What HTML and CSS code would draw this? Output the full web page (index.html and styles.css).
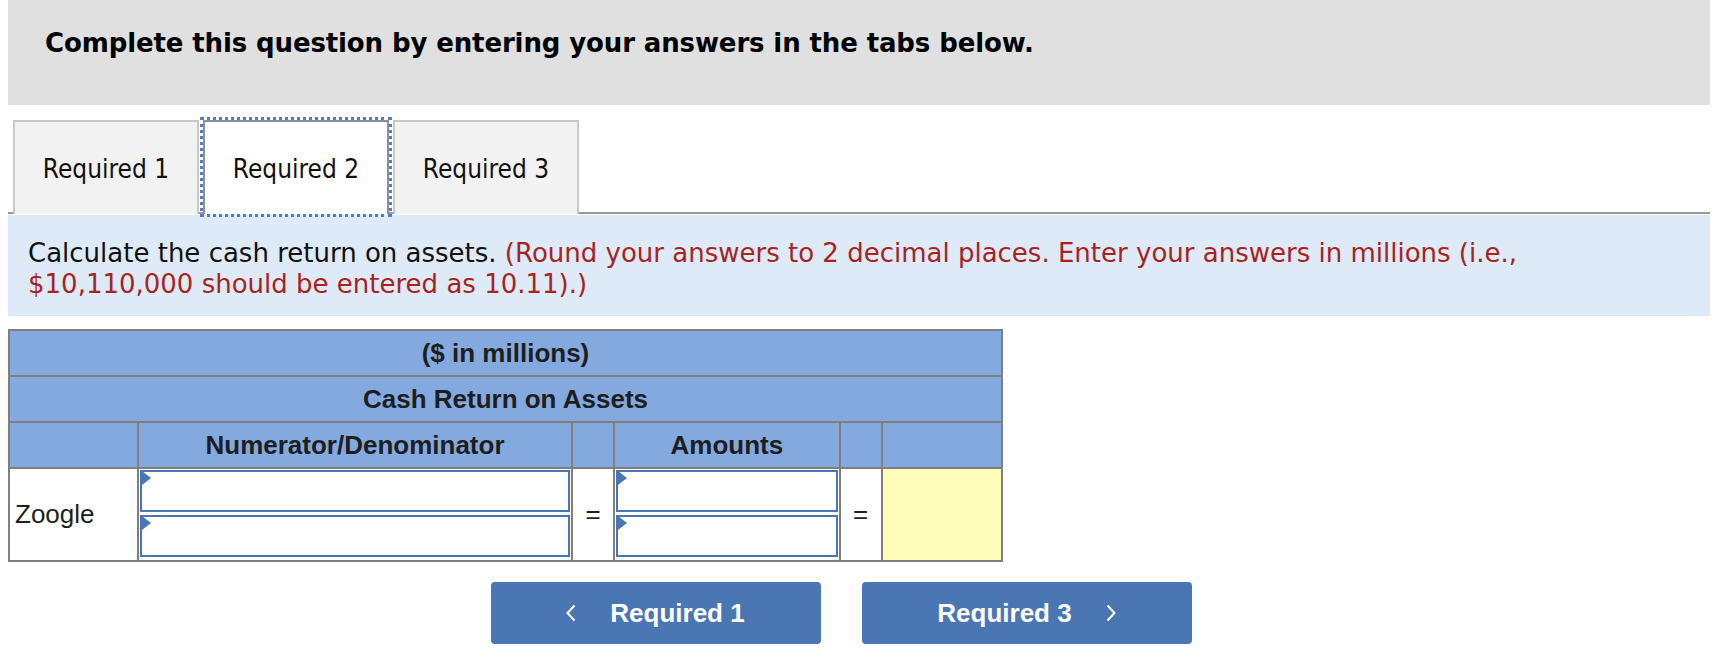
FILE: index.html
```html
<!DOCTYPE html>
<html lang="en">
<head>
<meta charset="utf-8">
<title>Cash return on assets</title>
<link rel="stylesheet" href="styles.css">
</head>
<body>
<div class="page">
  <header class="banner">
    <h1>Complete this question by entering your answers in the tabs below.</h1>
  </header>

  <nav class="tabs">
    <button class="tab">Required 1</button>
    <button class="tab active">Required 2</button>
    <button class="tab">Required 3</button>
  </nav>

  <div class="prompt">
    <p>Calculate the cash return on assets. <span class="note">(Round your answers to 2 decimal places. Enter your answers in millions (i.e.,<br>$10,110,000 should be entered as 10.11).)</span></p>
  </div>

  <table class="grid">
    <colgroup>
      <col class="c-label"><col class="c-frac"><col class="c-eq"><col class="c-amt"><col class="c-eq"><col class="c-res">
    </colgroup>
    <thead>
      <tr><th colspan="6">($ in millions)</th></tr>
      <tr><th colspan="6">Cash Return on Assets</th></tr>
      <tr><th></th><th>Numerator/Denominator</th><th></th><th>Amounts</th><th></th><th></th></tr>
    </thead>
    <tbody>
      <tr>
        <td class="label">Zoogle</td>
        <td class="inputs">
          <div class="field"><span class="flag"></span></div>
          <div class="field"><span class="flag"></span></div>
        </td>
        <td class="eq">=</td>
        <td class="inputs">
          <div class="field"><span class="flag"></span></div>
          <div class="field"><span class="flag"></span></div>
        </td>
        <td class="eq">=</td>
        <td class="result"></td>
      </tr>
    </tbody>
  </table>

  <div class="pager">
    <button class="nav-btn">
      <svg class="chev" viewBox="0 0 10 18" width="10" height="18"><polyline points="8.5,1.5 1.5,9 8.5,16.5" fill="none" stroke="#fff" stroke-width="2"/></svg>
      <span>Required 1</span>
    </button>
    <button class="nav-btn">
      <span>Required 3</span>
      <svg class="chev" viewBox="0 0 10 18" width="10" height="18"><polyline points="1.5,1.5 8.5,9 1.5,16.5" fill="none" stroke="#fff" stroke-width="2"/></svg>
    </button>
  </div>
</div>
</body>
</html>
```

FILE: styles.css
```css
html, body {
  margin: 0;
  padding: 0;
  background: #fff;
}

.page {
  width: 1702px;
  margin-left: 8px;
  font-family: "DejaVu Sans", Verdana, sans-serif;
}

.banner {
  background: #e0e0e0;
  height: 105px;
  box-sizing: border-box;
  padding: 27px 0 0 37px;
}

.banner h1 {
  margin: 0;
  font-size: 26px;
  line-height: 33px;
  font-weight: bold;
  color: #000;
  letter-spacing: -0.12px;
}

.tabs {
  display: flex;
  gap: 4px;
  margin-top: 15px;
  padding-left: 5px;
  border-bottom: 2px solid #999;
  height: 92px;
}

.tab {
  width: 186px;
  height: 94px;
  box-sizing: border-box;
  border: 2px solid #c8c8c8;
  border-bottom: none;
  background: #f2f2f2;
  font-family: "DejaVu Sans", Verdana, sans-serif;
  font-stretch: semi-condensed;
  font-size: 26px;
  color: #111;
  padding: 2px 0 0;
  position: relative;
}

.tab.active {
  background: #fff;
  border-color: #8f8f8f;
  z-index: 1;
  outline: 3px dotted #4f7fc6;
  outline-offset: 0;
}

.prompt {
  background: #deeaf7;
  margin-top: 1px;
  padding: 23px 20px 16px 20px;
}

.prompt p {
  margin: 0;
  font-size: 26px;
  line-height: 31px;
  color: #111;
}

.note {
  color: #a8231e;
}

.grid {
  margin-top: 13px;
  border-collapse: collapse;
  width: 995px;
  font-family: "Liberation Sans", Arial, sans-serif;
  color: #1e1e1e;
}

.c-label { width: 129px; }
.c-frac { width: 435px; }
.c-eq { width: 42px; }
.c-amt { width: 226px; }
.c-res { width: 121px; }

.grid th, .grid td {
  border: 2px solid #7f7f7f;
  padding: 0;
}

.grid th {
  background: #83a9de;
  height: 44px;
  font-size: 26px;
  font-weight: bold;
  text-align: center;
}

.grid td {
  height: 89px;
  font-size: 26px;
  background: #fff;
}

.grid td.label {
  padding-left: 5px;
}

.grid td.eq {
  text-align: center;
}

.grid td.result {
  background: #fefdb9;
}

.grid td.inputs {
  padding: 1px 1px;
  vertical-align: top;
}

.field {
  position: relative;
  height: 42px;
  box-sizing: border-box;
  border: 2px solid #4a76b4;
  background: #fff;
}

.field + .field {
  margin-top: 3px;
}

.flag {
  position: absolute;
  left: 0;
  top: -1px;
  width: 0;
  height: 0;
  border-top: 7px solid transparent;
  border-bottom: 7px solid transparent;
  border-left: 9px solid #4a76b4;
}

.pager {
  display: flex;
  justify-content: center;
  gap: 41px;
  margin-top: 20px;
  padding-right: 36px;
}

.nav-btn {
  width: 330px;
  height: 62px;
  border: none;
  border-radius: 4px;
  background: #4a76b4;
  color: #fff;
  font-family: "Liberation Sans", Arial, sans-serif;
  font-size: 26px;
  font-weight: bold;
  display: flex;
  align-items: center;
  justify-content: center;
  gap: 34px;
}

.chev {
  display: block;
}
```
